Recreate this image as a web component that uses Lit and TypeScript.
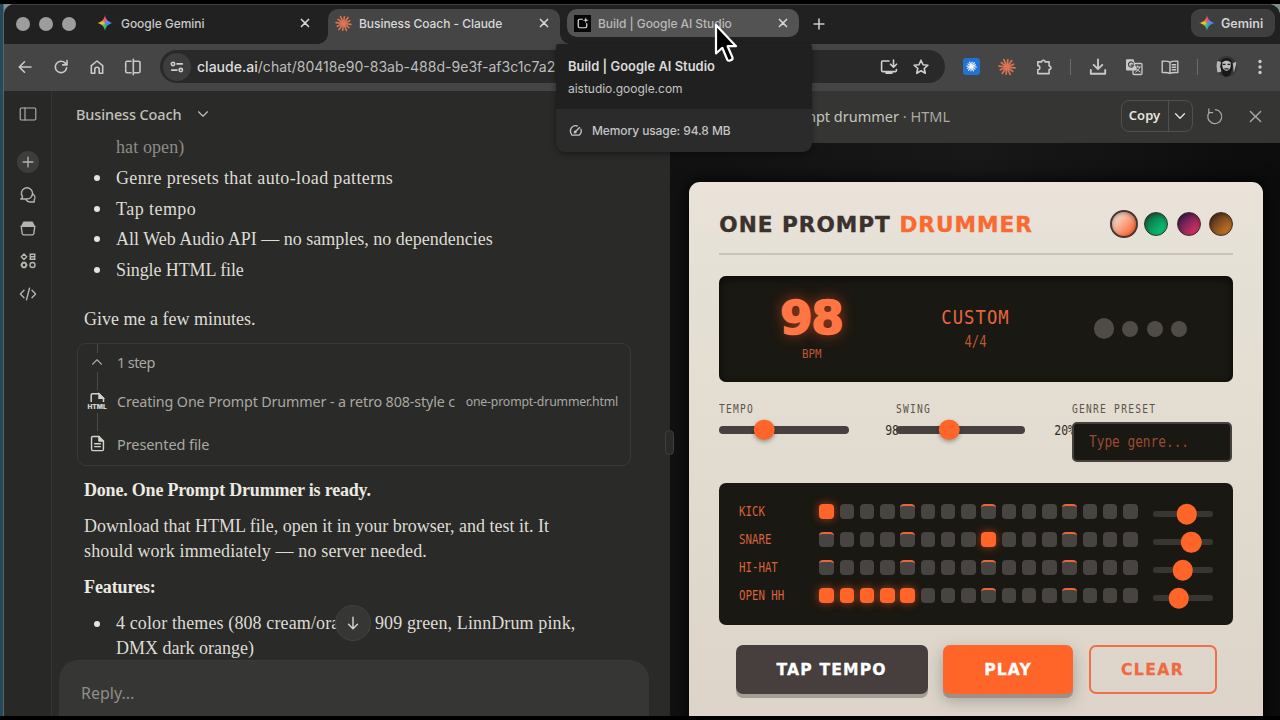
import { LitElement, html, css, svg, nothing } from "lit";
import { customElement, property } from "lit/decorators.js";
import { classMap } from "lit/directives/class-map.js";
import { styleMap } from "lit/directives/style-map.js";

const rays = Array.from({ length: 12 }, (_, i) => {
  const a = (i * Math.PI) / 6 + 0.12;
  const r = i % 2 ? 7.2 : 8;
  return svg`<line x1="9" y1="9" x2=${9 + r * Math.cos(a)} y2=${9 + r * Math.sin(a)} />`;
});

const glyphs: Record<string, unknown> = {
  close: svg`<path d="M5 5l8 8M13 5l-8 8"/>`,
  plus: svg`<path d="M9 3.5v11M3.5 9h11"/>`,
  back: svg`<path d="M15 9H3.5M8.5 3.8L3.3 9l5.2 5.2"/>`,
  reload: svg`<path d="M14.6 9.8a5.7 5.7 0 1 1-1.6-4.9l1.6 1.6"/><path d="M15 2.6v4.3h-4.3"/>`,
  home: svg`<path d="M3.3 7.6L9 3l5.700 4.600V15.200h-3.500V11.400a2.200 2.200 0 0 0-4.400 0V15.200H3.300z"/>`,
  split: svg`<path d="M7 3.200H3.200a1.500 1.500 0 0 0-1.500 1.500v8.600a1.500 1.500 0 0 0 1.500 1.500H7" stroke-dasharray="5 1.200"/><path d="M9.300 1.200v15.600M9.300 3.200h5.200a1.500 1.500 0 0 1 1.500 1.500v8.600a1.500 1.500 0 0 1-1.500 1.500H9.300"/>`,
  tune: svg`<circle cx="4.500" cy="5.500" r="1.900"/><path d="M9 5.500h6M3 12.500h6"/><circle cx="13.300" cy="12.500" r="1.900"/>`,
  install: svg`<path d="M9 3H2.600a1 1 0 0 0-1 1v8.600a1 1 0 0 0 1 1h12.800a1 1 0 0 0 1-1V11.500M6 15.200h6M13.500 2v6.800M10.500 6.200l3 3 3-3"/>`,
  star: svg`<path d="M9 2.200l2 4.500 4.900.500-3.700 3.300 1.100 4.800L9 12.800l-4.300 2.500 1.100-4.800L2.100 7.200l4.900-.500z"/>`,
  puzzle: svg`<path d="M2.800 3.900h3.900c0-2.300 3.400-2.300 3.400 0h4v4.100c2.400 0 2.400 3.400 0 3.400v4.200H2.800v-3.900c2.700-.200 2.700-3.900 0-4.100z"/>`,
  download: svg`<path d="M9 1.500v9.300M4.700 6.900L9 11.200l4.300-4.300M1.800 12v3.800h14.400V12"/>`,
  book: svg`<path d="M9 4.300v10.900M9 4.300C7 3 4 3 1.200 3.300v11.300c2.800-.300 5.800-.200 7.800.900 2-1.100 5-1.200 7.800-.900V3.300C14 3 11 3 9 4.300zM11.200 6.700h3.500M11.200 9.200h3.500M11.200 11.700h3.500"/>`,
  dots: svg`<g fill="currentColor" stroke="none"><circle cx="9" cy="3.500" r="1.700"/><circle cx="9" cy="9" r="1.700"/><circle cx="9" cy="14.500" r="1.700"/></g>`,
  chevron: svg`<path d="M4 6.500l5 5 5-5"/>`,
  chevronUp: svg`<path d="M4 11.500l5-5 5 5"/>`,
  panel: svg`<rect x="1.200" y="3" width="15.600" height="12" rx="1.200"/><path d="M6 3v12"/>`,
  chats: svg`<path d="M3.600 10.900A5.600 5.600 0 1 1 8 13H1.800c1-.5 1.600-1.200 1.800-2.100z"/><path d="M14.300 8.200c1.800 1.600 2 4.300.9 5.800v2H11c-1.700 0-3.200-.9-4-2.400"/>`,
  box: svg`<path d="M2.200 7.200h13.600l-1 7.300a1.600 1.600 0 0 1-1.600 1.400H4.800a1.600 1.600 0 0 1-1.600-1.400z"/><path d="M3 6.700L4.700 3.300h8.600L15 6.700z" fill="currentColor"/>`,
  shapes: svg`<path d="M5 2l2.700 2.700L5 7.400 2.300 4.700z"/><path d="M11 2.300h5M11 4.700h5M11 7.200h5M11.300 2.300v5M15.700 2.300v5"/><circle cx="13.500" cy="13" r="2.500"/><path d="M3.700 10.700h2.600L7.600 13l-1.300 2.300H3.700L2.400 13z" stroke-width="1.900"/>`,
  code: svg`<path d="M5 5.200L1.400 9 5 12.800M13 5.200L16.600 9 13 12.800M10.500 3.200L7.500 14.800"/>`,
  doc: svg`<path d="M10.500 1.500H4a1.300 1.300 0 0 0-1.300 1.300v12.400A1.300 1.300 0 0 0 4 16.500h10a1.300 1.300 0 0 0 1.300-1.300V6.300z"/><path d="M10.500 1.500v4.800h4.800" fill="currentColor"/><path d="M6 9.300h6M6 12.300h6"/>`,
  arrowDown: svg`<path d="M9 2.500v13M4 10.500l5 5 5-5"/>`,
  restart: svg`<path d="M3 1v4h4"/><path d="M10 1.700A7.400 7.400 0 1 1 3.300 4.700"/>`,
  gauge: svg`<path d="M4.800 14.500h8.400c2.600-1.700 3.200-4.500 2.300-7M11 3.600C5.500 1.800 0 8 4.800 14.500"/><path d="M8.300 11.200l5.500-5.700"/><circle cx="8.600" cy="10.800" r="1"/>`,
  burst: svg`<g stroke-width="1.700">${rays}</g>`,
  studio: svg`<path d="M9 4.500H6a1.500 1.500 0 0 0-1.500 1.500v6A1.500 1.500 0 0 0 6 13.500h6a1.500 1.500 0 0 0 1.500-1.500V9"/><path d="M12.500 2.300l.7 2.500 2.500.7-2.500.7-.7 2.500-.7-2.500-2.500-.7 2.500-.7z" fill="currentColor" stroke="none"/>`,
  translate: svg`<rect x="8" y="5.500" width="9" height="11" rx="1"/><path d="M10 9h5.500M12.700 7.800V9M14.800 9c-.500 2.500-2.500 4-4 5M11.300 10.500c1 1.500 2.500 2.700 4 3.500" stroke-width="1"/><path d="M1 2.300A1 1 0 0 1 2 1.300h6.500l3.500 11.200H2a1 1 0 0 1-1-1z" fill="currentColor" stroke="none"/><path d="M8.300 5.200A2.600 2.600 0 1 0 8.600 7.200H6.200" stroke="#454545" stroke-width="1.200"/>`,
};

@customElement("ui-icon")
class UiIcon extends LitElement {
  @property() name = "";
  @property({ type: Number }) size = 18;
  @property({ type: Number }) weight = 1.6;
  static styles = css`
    :host { display: inline-flex; flex: none; }
    svg { display: block; overflow: visible; }
  `;
  render() {
    return html`<svg width=${this.size} height=${this.size} viewBox="0 0 18 18" fill="none"
      stroke="currentColor" stroke-width=${this.weight} stroke-linecap="round" stroke-linejoin="round">${glyphs[this.name]}</svg>`;
  }
}

@customElement("gemini-star")
class GeminiStar extends LitElement {
  static styles = css`
    :host { display: block; flex: none; width: 16px; height: 16px;
      background: conic-gradient(from 0deg, #f0506a 0deg, #5a8cf5 60deg, #4285f4 110deg, #36b37a 170deg, #46c070 200deg, #f3c634 265deg, #f09a3a 300deg, #f0506a 360deg);
      clip-path: path("M8 0C8.700 4.600 11.400 7.300 16 8C11.400 8.700 8.700 11.400 8 16C7.300 11.400 4.600 8.700 0 8C4.600 7.300 7.300 4.600 8 0Z"); }
  `;
  render() { return nothing; }
}

@customElement("browser-chrome")
class BrowserChrome extends LitElement {
  static styles = css`
    :host { display: block; font-family: Inter, sans-serif; color: #c9c9c9; }
    .tabs { display: flex; height: 40px; background: #212122; box-sizing: border-box; border-top: 1px solid #3c4041; }
    .lights { display: flex; gap: 9px; padding: 12px 22px 0 12px; }
    .lights i { width: 14px; height: 14px; border-radius: 50%; background: #9d9d9d; }
    .tab { display: flex; align-items: center; box-sizing: border-box; height: 28px; margin-top: 4px; font-size: 12px; font-weight: 500; white-space: nowrap; letter-spacing: -.05px; }
    .tab ui-icon.x { margin-left: auto; color: #d6d6d6; }
    .first { width: 218px; padding: 0 2px 0 0; margin-left: -1px; }
    .first span { margin-left: 8px; }
    .active { position: relative; width: 232px; margin-left: 13px; height: 35px; padding: 0 8px 7px 7px; background: #454545; border-radius: 10px 10px 0 0; color: #d8d8d8; }
    .active::before, .active::after { content: ""; position: absolute; bottom: 0; width: 10px; height: 10px; }
    .active::before { left: -10px; background: radial-gradient(circle at 0 0, transparent 9.500px, #454545 10px); }
    .active::after { right: -10px; background: radial-gradient(circle at 100% 0, transparent 9.500px, #454545 10px); }
    .active span { margin-left: 7px; }
    .hover { width: 232px; margin-left: 7px; padding: 0 8px 0 7px; background: #545354; border-radius: 10px; color: #b9b9b9; }
    .hover span { margin-left: 7px; }
    .studio { display: flex; background: #060606; color: #ddd; padding: 0; }
    .claude { color: #dd7455; }
    .new { margin: 11px 0 0 12px; }
    .gem { display: flex; align-items: center; gap: 6px; box-sizing: border-box; width: 84px; height: 28px; margin: 4px 5px 0 auto; padding-left: 8px; border-radius: 9px; background: #3f3f40; font-size: 12.5px; font-weight: 600; color: #d2d2d2; }
    .bar { display: flex; align-items: center; height: 47px; background: #454545; box-sizing: border-box; padding: 0 11px 2px 12px; }
    .nav { display: flex; gap: 18px; }
    .url { display: flex; align-items: center; box-sizing: border-box; width: 785px; height: 33px; margin-left: 18px; padding: 0 15px 0 3px; border-radius: 17px; background: #292929; font-size: 14.050px; color: #bdbdbd; }
    .site { display: flex; align-items: center; justify-content: center; width: 28px; height: 28px; border-radius: 50%; background: #3d3d3d; color: #d0d0d0; }
    .addr { margin-left: 6px; white-space: nowrap; }
    .addr b { font-weight: 500; color: #dcdcdc; }
    .in { display: flex; gap: 14px; margin-left: auto; color: #cfcfcf; }
    .ext { display: flex; align-items: center; flex: 1; justify-content: space-between; margin-left: 18px; }
    .blue { display: flex; align-items: center; justify-content: center; width: 17px; height: 17px; border-radius: 3px; background: #2271d3; color: #fff; }
    .sep { width: 1.500px; height: 16px; background: #6b6b6b; margin: 0 -1px; }
    .face { width: 21px; height: 21px; border-radius: 50%; overflow: hidden; }
    .more { margin-left: -4px; }
  `;
  render() {
    return html`
      <div class="tabs">
        <div class="lights"><i></i><i></i><i></i></div>
        <div class="tab first"><gemini-star></gemini-star><span>Google Gemini</span><ui-icon class="x" name="close" size="16" weight="1.800"></ui-icon></div>
        <div class="tab active"><ui-icon class="claude" name="burst" size="17"></ui-icon><span>Business Coach - Claude</span><ui-icon class="x" name="close" size="16" weight="1.800"></ui-icon></div>
        <div class="tab hover"><div class="studio"><ui-icon name="studio" size="17" weight="1.300"></ui-icon></div><span>Build | Google AI Studio</span><ui-icon class="x" name="close" size="16" weight="1.800"></ui-icon></div>
        <ui-icon class="new" name="plus" size="16" weight="1.800"></ui-icon>
        <div class="gem"><gemini-star></gemini-star>Gemini</div>
      </div>
      <div class="bar">
        <div class="nav">
          <ui-icon name="back"></ui-icon><ui-icon name="reload"></ui-icon><ui-icon name="home"></ui-icon><ui-icon name="split"></ui-icon>
        </div>
        <div class="url">
          <div class="site"><ui-icon name="tune" size="16" weight="1.800"></ui-icon></div>
          <div class="addr"><b>claude.ai</b>/chat/80418e90-83ab-488d-9e3f-af3c1c7a2</div>
          <div class="in"><ui-icon name="install"></ui-icon><ui-icon name="star"></ui-icon></div>
        </div>
        <div class="ext">
          <div class="blue"><ui-icon name="burst" size="11" weight="2"></ui-icon></div>
          <ui-icon class="claude" name="burst"></ui-icon>
          <ui-icon name="puzzle"></ui-icon>
          <div class="sep"></div>
          <ui-icon name="download" weight="1.900"></ui-icon>
          <ui-icon name="translate" weight="1.300"></ui-icon>
          <ui-icon name="book" weight="1.400"></ui-icon>
          <div class="sep"></div>
          <svg class="face" viewBox="0 0 20 20"><rect width="20" height="20" fill="#353535"/><path d="M0 4l5 2v9l-4 1zM20 5l-4 2 1 9z" fill="#b5b5b5"/><path d="M5 5c1-4 9-4 10 0l1 5-2 7c-3 4-6 4-8 0L4 10z" fill="#181818"/><path d="M6 6c2-2 6-2 8 0v3c0 3-2 5-4 5s-4-2-4-5z" fill="#bcbcbc"/><path d="M6.500 8h2.500M11 8h2.500M8 12.300h4" stroke="#222" stroke-width="1.300"/></svg>
          <ui-icon class="more" name="dots"></ui-icon>
        </div>
      </div>`;
  }
}

@customElement("chat-pane")
class ChatPane extends LitElement {
  static styles = css`
    :host { display: flex; width: 666px; height: 100%; background: #2a2a28; font-family: "Noto Sans", sans-serif; color: #d8d6cf; }
    .rail { display: flex; flex-direction: column; align-items: center; width: 47px; box-sizing: content-box; border-right: 1px solid #343432; background: #282826; color: #b5b4ae; padding-top: 14px; }
    .rail ui-icon { height: 18px; margin-bottom: 15px; }
    .add { display: flex; align-items: center; justify-content: center; width: 22px; height: 22px; border-radius: 50%; background: #3d3d3b; margin: 13px 0; }
    .rail .add ui-icon { height: 16px; margin: 0; }
    .main { position: relative; flex: 1; overflow: hidden; display: flex; flex-direction: column; }
    .head { display: flex; align-items: center; gap: 14px; flex: none; height: 44px; padding: 2px 0 0 24px; box-sizing: border-box; font-size: 14.500px; font-weight: 500; color: #c1c0ba; letter-spacing: -.14px; }
    .log { flex: 1; padding: 0 0 0 32px; font-family: "Liberation Serif", serif; font-size: 18px; overflow: hidden; white-space: nowrap; color: #dedcd5; }
    ul { margin: 0; padding: 0 0 0 32px; list-style: none; line-height: 26px; }
    .u1 { display: flex; flex-direction: column; gap: 4.600px; margin-top: -.7px; }
    li { position: relative; }
    .cut { color: #8d8c87; letter-spacing: .1px; }
    .genre { letter-spacing: .36px; }
    .tap { letter-spacing: .45px; }
    .single { letter-spacing: -.1px; }
    li:not(.cut)::before { content: ""; position: absolute; left: -22px; top: 10px; width: 6px; height: 6px; border-radius: 50%; background: #e6e4dd; }
    p { margin: 0; }
    .wait { margin-top: 23.700px; line-height: 26px; }
    .card { position: relative; display: grid; grid-template-rows: 38px 41px 43px; align-items: center; box-sizing: border-box; width: 554px; height: 123px; margin: 10.500px 0 0 -7px; border: 1px solid #393937; border-radius: 9px; font-family: "Noto Sans", sans-serif; font-size: 14.500px; color: #a9a8a2; }
    .line { display: flex; align-items: center; padding-left: 9px; margin-top: -1px; }
    .line ui-icon, .file { flex: none; width: 20px; justify-content: center; margin-right: 10px; }
    .rule { position: absolute; left: 19px; width: 1px; height: 18px; background: #4a4a47; }
    .r1 { top: 0; height: 9px; } .r2 { top: 28px; } .r3 { top: 69px; }
    .file { display: flex; flex-direction: column; align-items: center; color: #d3d2cc; }
    .file svg { display: block; overflow: visible; }
    .file span { font: 900 6.500px/6px Inter, sans-serif; }
    .light { color: #d3d2cc; }
    .fname { margin-left: auto; padding-right: 12px; font-size: 12.300px; letter-spacing: -.18px; }
    .one { letter-spacing: -.6px; }
    .step { letter-spacing: -.12px; font-size: 14.300px; }
    .pf { letter-spacing: -.08px; }
    .b { font-weight: 700; line-height: 24px; color: #eceae3; letter-spacing: -.2px; }
    .done { margin-top: 12.500px; }
    .dl { margin-top: 12px; line-height: 24.500px; }
    .work { letter-spacing: .13px; }
    .feat { margin-top: 11.500px; letter-spacing: -.1px; }
    .u2 { margin-top: 12px; line-height: 25.500px; }
    .themes { letter-spacing: .12px; }
    .reply { position: absolute; left: 7px; top: 569px; width: 590px; height: 80px; box-sizing: border-box; border-radius: 20px 20px 0 0; background: #363634; padding: 21px 22px; font-size: 16px; line-height: 22px; color: #8f8e88; border-top: 1px solid #3a3a38; }
    .jump { position: absolute; left: 283px; top: 514px; width: 36px; height: 36px; border-radius: 50%; background: #363634; box-sizing: border-box; border: 1px solid #41413f; display: flex; align-items: center; justify-content: center; color: #d6d5cf; }
  `;
  render() {
    return html`
      <div class="rail">
        <ui-icon name="panel" weight="1.100"></ui-icon>
        <div class="add"><ui-icon name="plus" size="16" weight="1.500"></ui-icon></div>
        <ui-icon name="chats" weight="1.400"></ui-icon>
        <ui-icon name="box" weight="1.400"></ui-icon>
        <ui-icon name="shapes" weight="1.400"></ui-icon>
        <ui-icon name="code" weight="1.400"></ui-icon>
      </div>
      <div class="main">
        <div class="head"><span>Business Coach</span><ui-icon name="chevron" size="16" weight="1.300"></ui-icon></div>
        <div class="log">
          <ul class="u1">
            <li class="cut">hat open)</li>
            <li class="genre">Genre presets that auto-load patterns</li>
            <li class="tap">Tap tempo</li>
            <li>All Web Audio API — no samples, no dependencies</li>
            <li class="single">Single HTML file</li>
          </ul>
          <p class="wait">Give me a few minutes.</p>
          <div class="card">
            <i class="rule r1"></i><i class="rule r2"></i><i class="rule r3"></i>
            <div class="line"><ui-icon name="chevronUp" size="16" weight="1.300"></ui-icon><span class="one">1 step</span></div>
            <div class="line"><div class="file"><svg width="15" height="11" viewBox="0 0 15 11" fill="none" stroke="currentColor" stroke-width="1.500"><path d="M1.200 9V2A1.200 1.200 0 0 1 2.400 .8H9l4.500 4.400V9"/><path d="M9 1v4.300h4.300z" fill="currentColor"/></svg><span>HTML</span></div><span class="step">Creating One Prompt Drummer - a retro 808-style c</span><span class="fname">one-prompt-drummer.html</span></div>
            <div class="line"><ui-icon class="light" name="doc" size="17" weight="1.500"></ui-icon><span class="pf">Presented file</span></div>
          </div>
          <p class="b done">Done. One Prompt Drummer is ready.</p>
          <p class="dl">Download that HTML file, open it in your browser, and test it. It<br><span class="work">should work immediately — no server needed.</span></p>
          <p class="b feat">Features:</p>
          <ul class="u2"><li><span class="themes">4 color themes (808 cream/orange, 909 green, LinnDrum pink,</span><br>DMX dark orange)</li></ul>
        </div>
        <div class="jump"><ui-icon name="arrowDown" size="16" weight="1.600"></ui-icon></div>
        <div class="reply">Reply...</div>
      </div>`;
  }
}

const tracks = [
  { name: "KICK", on: [0], level: 57 },
  { name: "SNARE", on: [8], level: 64 },
  { name: "HI-HAT", on: [] as number[], level: 50 },
  { name: "OPEN HH", on: [0, 1, 2, 3, 4], level: 43 },
];

@customElement("drum-machine")
class DrumMachine extends LitElement {
  static styles = css`
    :host { display: block; box-sizing: border-box; width: 573.500px; height: 560px; margin-left: 19.300px; padding: 28px 30px; border-radius: 11px; background: linear-gradient(#ebe2da 0, #e5e1d6 70px, #e3dcd1 240px, #dcd4c9 540px); font-family: "DejaVu Sans Mono", monospace; color: #3a322d; box-shadow: 0 0 18px #000; }
    .top { display: flex; align-items: center; justify-content: space-between; height: 28px; padding-bottom: 15px; border-bottom: 2px solid #c9c3ba; }
    h1 { margin: 0; padding-top: 1px; font: 700 21.600px/28px "DejaVu Sans", sans-serif; letter-spacing: 1px; white-space: nowrap; -webkit-text-stroke: .4px; }
    h1 em { font-style: normal; color: #f96a33; }
    .themes { display: flex; align-items: center; gap: 8.300px; }
    .themes i { width: 24px; height: 24px; border-radius: 50%; box-sizing: border-box; border: 1.500px solid #3c2e26; box-shadow: inset 0 1px 4px #0006; }
    .t0.t0 { width: 28px; height: 28px; border: 2px solid #4b362d; background: linear-gradient(135deg, #f6dfd4 15%, #ff6a35 85%); margin-right: -2.300px; }
    .t1 { background: linear-gradient(135deg, #136241 10%, #06c375 80%); }
    .t2 { background: linear-gradient(135deg, #451b52 15%, #e63465 90%); }
    .t3 { background: linear-gradient(135deg, #4c2d18 10%, #d17c26 90%); }
    .lcd { display: grid; grid-template-columns: 184px 145px 184px; align-items: center; height: 106px; margin-top: 20.500px; border-radius: 7px; background: #1a1812; box-shadow: inset 0 2px 8px #000a; color: #e9673f; text-align: center; }
    .bpm b { display: block; font: 900 47px/40px "DejaVu Sans", sans-serif; letter-spacing: -1.500px; color: #ff7544; -webkit-text-stroke: 1.600px #ff7544; text-shadow: 0 0 14px #ff5a24a0; margin-top: 2px; }
    .bpm span { display: inline-block; margin-top: 9px; font-size: 13px; line-height: 14px; transform: scaleX(.83); color: #bd5736; }
    .mode { line-height: 20px; font-size: 19.500px; padding-top: 2px; }
    .mode span, .mode small { display: block; }
    .mode span { transform: scaleX(.88); letter-spacing: 1.200px; }
    .mode small { font-size: 15px; line-height: 18px; margin-top: 5px; color: #bd5736; transform: scaleX(.82); }
    .beats { display: flex; align-items: center; justify-content: center; gap: 8.200px; }
    .beats i { width: 16px; height: 16px; border-radius: 50%; background: #4f4c48; }
    .beats i:first-child { width: 20.500px; height: 20.500px; }
    .ctl { display: grid; grid-template-columns: repeat(3, 160.500px); gap: 15.800px; height: 63px; margin-top: 19px; }
    label { display: block; height: 16px; font-size: 12px; line-height: 16px; color: #5c534c; white-space: nowrap; transform: scaleX(.8); transform-origin: 0 0; letter-spacing: 1.550px; }
    .row { display: flex; align-items: center; gap: 15px; height: 20px; margin-top: 3px; }
    .slider { flex: none; position: relative; z-index: 1; width: 129.500px; height: 8px; border-radius: 4px; background: #48403e; }
    .knob { position: absolute; top: 50%; width: 20.500px; height: 20.500px; border-radius: 50%; background: #ff6428; transform: translate(-50%, -50%); box-shadow: 0 2px 4px #0005; }
    .val { flex: none; width: 35px; font-size: 14px; text-align: right; transform: scaleX(.82); transform-origin: 100% 50%; color: #342d28; }
    .field { position: relative; z-index: 2; box-sizing: border-box; height: 40px; margin-top: 5.500px; padding-left: 15.500px; border: 2px solid #48403e; border-radius: 5px; background: #1a1812; font-size: 15px; line-height: 36px; color: #984b32; white-space: nowrap; }
    .field span { display: inline-block; transform: scaleX(.852); transform-origin: 0 50%; }
    .seq { display: flex; flex-direction: column; justify-content: center; gap: 13.500px; height: 142px; margin-top: 19px; padding: 0 20px; border-radius: 7px; background: #1a1812; }
    .track { display: flex; align-items: center; height: 14.500px; }
    .track .n { width: 80.200px; font-size: 13.200px; color: #d8623e; white-space: pre; }
    .track .n span { display: inline-block; transform: scaleX(.815); transform-origin: 0 50%; }
    .steps { display: flex; gap: 5.750px; }
    .steps i { box-sizing: border-box; width: 14.500px; height: 14.500px; border-radius: 4px; background: #484441; }
    .steps .acc { border-top: 2px solid #e9663d; }
    .steps .on { border: 0; background: #ff6428; box-shadow: 0 0 8px #ff5a24a0; }
    .vol { margin: 5px 0 0 15.200px; flex: none; width: 60px; height: 6px; background: #393631; border-radius: 3px; }
    .vol .knob { box-shadow: none; }
    .btns { display: flex; justify-content: center; gap: 15.500px; margin-top: 20px; font: 700 15.600px/50px "DejaVu Sans", sans-serif; letter-spacing: 1.150px; text-align: center; color: #fff; -webkit-text-stroke: .3px; }
    .btns div { box-sizing: border-box; height: 49px; border-radius: 7px; }
    .tap { width: 192px; background: #463f3e; box-shadow: 0 4px 0 #a39d97; }
    .play { width: 130px; background: #ff6428; box-shadow: 0 4px 0 #9f8f84, 0 6px 16px #0004; }
    .btns .clear { width: 128px; border: 2px solid #ee7049; line-height: 46px; color: #ee6a42; letter-spacing: 1.400px; }
  `;
  render() {
    return html`
      <div class="top"><h1>ONE PROMPT <em>DRUMMER</em></h1><div class="themes"><i class="t0"></i><i class="t1"></i><i class="t2"></i><i class="t3"></i></div></div>
      <div class="lcd">
        <div class="bpm"><b>98</b><span>BPM</span></div>
        <div class="mode"><span>CUSTOM</span><small>4/4</small></div>
        <div class="beats"><i></i><i></i><i></i><i></i></div>
      </div>
      <div class="ctl">
        <div><label>TEMPO</label><div class="row"><div class="slider"><div class="knob" style=${styleMap({ left: "34.8%" })}></div></div><span class="val">98</span></div></div>
        <div><label>SWING</label><div class="row"><div class="slider"><div class="knob" style=${styleMap({ left: "41.5%" })}></div></div><span class="val">20%</span></div></div>
        <div><label>GENRE PRESET</label><div class="field"><span>Type genre...</span></div></div>
      </div>
      <div class="seq">
        ${tracks.map((t) => html`<div class="track">
          <div class="n"><span>${t.name}</span></div>
          <div class="steps">${Array.from({ length: 16 }, (_, i) => html`<i class=${classMap({ acc: i % 4 === 0, on: t.on.includes(i) })}></i>`)}</div>
          <div class="slider vol"><div class="knob" style=${styleMap({ left: `${t.level}%` })}></div></div>
        </div>`)}
      </div>
      <div class="btns"><div class="tap">TAP TEMPO</div><div class="play">PLAY</div><div class="clear">CLEAR</div></div>`;
  }
}

@customElement("preview-pane")
class PreviewPane extends LitElement {
  static styles = css`
    :host { display: block; position: relative; flex: 1; background: linear-gradient(90deg, #111, #181818 50%, #0c0c0d); font-family: "Noto Sans", sans-serif; }
    .head { display: flex; align-items: center; height: 52px; box-sizing: border-box; background: #353533; color: #aaa9a3; font-size: 14.500px; padding: 0 13px 2px 0; margin-bottom: 39px; }
    .name { width: 280px; text-align: right; white-space: nowrap; }
    .name span { color: #c5c4be; }
    .copy { display: flex; box-sizing: border-box; width: 72px; height: 32px; margin-left: auto; border: 1px solid #50504d; border-radius: 8px; color: #e5e4de; font-size: 13px; font-weight: 600; line-height: 29px; }
    .copy span { width: 46px; text-align: center; border-right: 1px solid #50504d; }
    .copy ui-icon { margin: auto; }
    .rs { margin: 0 0 0 13.500px; } .cl { margin-left: 21px; }
    .grip { position: absolute; left: -5px; top: 339px; width: 7px; height: 23px; border: 1px solid #3f3f3d; border-radius: 5px; background: #2a2a28; }
  `;
  render() {
    return html`<div class="head"><div class="name"><span>One prompt drummer</span> · HTML</div>
        <div class="copy"><span>Copy</span><ui-icon name="chevron" size="16" weight="1.500"></ui-icon></div>
        <ui-icon class="rs" name="restart" size="17" weight="1.300"></ui-icon><ui-icon class="cl" name="close" size="23" weight="1.100"></ui-icon></div>
      <drum-machine></drum-machine><i class="grip"></i>`;
  }
}

@customElement("tab-tooltip")
class TabTooltip extends LitElement {
  static styles = css`
    :host { display: block; box-sizing: border-box; width: 256px; height: 108px; border-radius: 3px 3px 9px 9px; overflow: hidden; background: #2b2b2c; font-family: Inter, sans-serif; font-size: 12px; color: #c4c4c4; box-shadow: 0 2px 6px #0006; }
    .up { height: 65px; box-sizing: border-box; background: #202021; padding: 13px 12px 0; line-height: 20px; }
    .t { font-size: 12.900px; font-weight: 600; color: #dbdbdb; letter-spacing: .03px; }
    .s { margin-top: 2px; letter-spacing: -.02px; }
    .m { display: flex; align-items: center; gap: 9px; height: 43px; padding-left: 12px; font-weight: 500; letter-spacing: -.1px; }
  `;
  render() {
    return html`<div class="up"><div class="t">Build | Google AI Studio</div><div class="s">aistudio.google.com</div></div>
      <div class="m"><ui-icon name="gauge" size="15" weight="1.600"></ui-icon><span>Memory usage: 94.8 MB</span></div>`;
  }
}

@customElement("app-root")
class AppRoot extends LitElement {
  static styles = css`
    :host { display: block; position: relative; box-sizing: border-box; width: 1280px; height: 720px; padding: 4px 0; background: #000; overflow: hidden; }
    .desk { height: 712px; box-sizing: border-box; padding-left: 3px; background: linear-gradient(90deg, #24495b 0, #24495b 3px, #7f8d8f 4px, #7f8d8f); }
    .win { display: flex; flex-direction: column; height: 712px; box-sizing: border-box; border-left: 1px solid #5d6668; border-radius: 12px 12px 0 0; overflow: hidden; background: #212122; }
    .body { display: flex; height: 625px; overflow: hidden; }
    .tip { position: absolute; left: 556px; top: 44px; z-index: 5; }
    .cursor { position: absolute; left: 713.500px; top: 22px; z-index: 6; overflow: visible; }
  `;
  render() {
    return html`<div class="desk"><div class="win"><browser-chrome></browser-chrome>
      <div class="body"><chat-pane></chat-pane><preview-pane></preview-pane></div></div></div>
      <tab-tooltip class="tip"></tab-tooltip>
      <svg class="cursor" width="26" height="44" viewBox="0 0 26 44"><path d="M2 3v28.500l6.300-5.700 5 11.900c1.200 2.200 6 .2 5.200-2.200L13.600 24.200H22z" fill="#000" stroke="#fff" stroke-width="2.200" stroke-linejoin="round"/></svg>`;
  }
}
